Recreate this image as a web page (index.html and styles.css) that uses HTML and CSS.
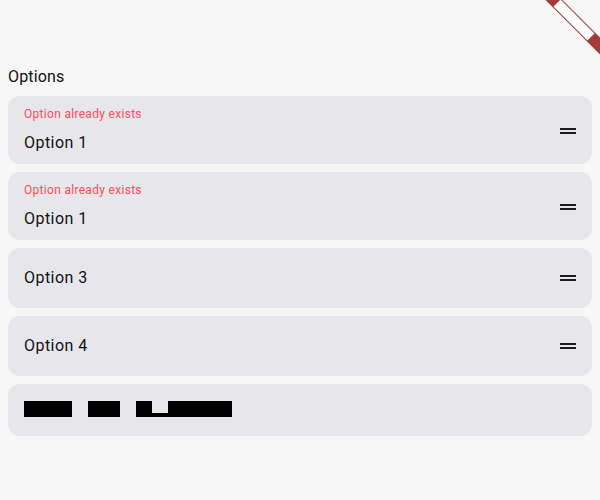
FILE: index.html
```html
<!DOCTYPE html>
<html>
<head>
<meta charset="utf-8">
<link rel="stylesheet" href="styles.css">
</head>
<body>
<div class="page">
  <div class="label">Options</div>
  <div class="list">
    <div class="card tall">
      <div class="fields">
        <div class="error">Option already exists</div>
        <div class="value">Option 1</div>
      </div>
      <svg class="handle" width="24" height="24" viewBox="0 0 24 24"><path d="M4 9h16v2H4zM4 13h16v2H4z" fill="#1c1b1f"/></svg>
    </div>
    <div class="card tall">
      <div class="fields">
        <div class="error">Option already exists</div>
        <div class="value">Option 1</div>
      </div>
      <svg class="handle" width="24" height="24" viewBox="0 0 24 24"><path d="M4 9h16v2H4zM4 13h16v2H4z" fill="#1c1b1f"/></svg>
    </div>
    <div class="card">
      <div class="fields">
        <div class="value">Option 3</div>
      </div>
      <svg class="handle" width="24" height="24" viewBox="0 0 24 24"><path d="M4 9h16v2H4zM4 13h16v2H4z" fill="#1c1b1f"/></svg>
    </div>
    <div class="card">
      <div class="fields">
        <div class="value">Option 4</div>
      </div>
      <svg class="handle" width="24" height="24" viewBox="0 0 24 24"><path d="M4 9h16v2H4zM4 13h16v2H4z" fill="#1c1b1f"/></svg>
    </div>
    <div class="card add">
      <div class="tofu">
        <span class="box w48"></span>
        <span class="box w32"></span>
        <span class="box w96"><span class="notch"></span></span>
      </div>
    </div>
  </div>
</div>
<div class="banner"><span class="banner-text"></span></div>
</body>
</html>
```

FILE: styles.css
```css
html, body {
  margin: 0;
  padding: 0;
  background: #f7f7f7;
  overflow: hidden;
  width: 600px;
  height: 500px;
}
body {
  font-family: Roboto, "Liberation Sans", sans-serif;
  color: #111111;
  position: relative;
}
.page {
  padding: 65px 8px 0 8px;
}
.label {
  font-size: 16px;
  line-height: 24px;
  letter-spacing: 0.15px;
  margin-bottom: 7px;
}
.list {
  display: flex;
  flex-direction: column;
  gap: 8px;
}
.card {
  background: #e7e7eb;
  border-radius: 12px;
  display: flex;
  align-items: center;
  padding: 18px 12px 18px 16px;
}
.card.tall {
  padding: 10px 12px 9px 16px;
}
.fields {
  flex: 1;
  display: flex;
  flex-direction: column;
}
.error {
  color: #ff4d5a;
  font-size: 12px;
  line-height: 16px;
  letter-spacing: 0.3px;
  margin-bottom: 9px;
}
.value {
  font-size: 16px;
  line-height: 24px;
  letter-spacing: 0.45px;
}
.handle {
  display: block;
  flex: none;
}
.card.add {
  padding: 17px 16px 19px 16px;
}
.tofu {
  display: flex;
  gap: 16px;
}
.box {
  display: block;
  height: 16px;
  background: #000;
  position: relative;
}
.w48 { width: 48px; }
.w32 { width: 32px; }
.w96 { width: 96px; }
.notch {
  position: absolute;
  left: 16px;
  top: 0;
  width: 16px;
  height: 12px;
  background: #e7e7eb;
}
.banner {
  position: absolute;
  left: 504px;
  top: 14px;
  width: 140px;
  height: 12px;
  background: #a43b3b;
  transform: rotate(45deg);
  display: flex;
  align-items: center;
  justify-content: center;
}
.banner-text {
  display: block;
  width: 48px;
  height: 10px;
  background: #ffffff;
}
```
